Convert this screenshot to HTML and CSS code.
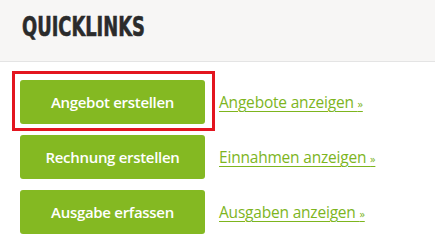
FILE: index.html
```html
<!DOCTYPE html>
<html lang="de">
<head>
<meta charset="utf-8">
<title>Quicklinks</title>
<link rel="stylesheet" href="styles.css">
</head>
<body>
<section class="quicklinks">
  <header class="ql-header">
    <h2 class="ql-title">QUICKLINKS</h2>
  </header>
  <div class="ql-list">
    <div class="ql-row">
      <a class="ql-button is-highlighted" href="#">Angebot erstellen</a>
      <a class="ql-link" href="#">Angebote anzeigen <span class="raquo">»</span></a>
    </div>
    <div class="ql-row">
      <a class="ql-button" href="#">Rechnung erstellen</a>
      <a class="ql-link" href="#">Einnahmen anzeigen <span class="raquo">»</span></a>
    </div>
    <div class="ql-row">
      <a class="ql-button" href="#">Ausgabe erfassen</a>
      <a class="ql-link" href="#">Ausgaben anzeigen <span class="raquo">»</span></a>
    </div>
  </div>
</section>
</body>
</html>
```

FILE: styles.css
```css
html, body {
  margin: 0;
  padding: 0;
  background: #ffffff;
}

.quicklinks {
  width: 435px;
  height: 249px;
  font-family: "Open Sans", "DejaVu Sans", sans-serif;
}

.ql-header {
  box-sizing: border-box;
  height: 62px;
  padding: 13px 0 0 22px;
  background: #f7f6f5;
  border-bottom: 1px solid #e4e4e4;
}

.ql-title {
  margin: 0;
  display: inline-block;
  font-family: "DejaVu Sans", sans-serif;
  font-stretch: condensed;
  font-weight: bold;
  font-size: 27px;
  line-height: 1;
  color: #2b2b2b;
  -webkit-text-stroke: 0.6px #2b2b2b;
  transform: scaleX(0.735);
  transform-origin: left top;
}

.ql-list {
  display: flex;
  flex-direction: column;
  gap: 11px;
  padding: 18px 0 0 20px;
}

.ql-row {
  display: flex;
  align-items: center;
  gap: 14px;
}

.ql-button {
  position: relative;
  display: flex;
  align-items: center;
  justify-content: center;
  width: 185px;
  height: 44px;
  border-radius: 3px;
  background: #84b922;
  color: #ffffff;
  font-size: 15px;
  font-weight: 600;
  letter-spacing: -0.3px;
  text-decoration: none;
}

.ql-button.is-highlighted::after {
  content: "";
  position: absolute;
  left: -8px;
  top: -9px;
  right: -10px;
  bottom: -7px;
  border: 3px solid #e3151f;
}

.ql-link {
  color: #7db51e;
  font-size: 15.5px;
  text-decoration: underline;
  text-underline-offset: 3px;
  letter-spacing: -0.2px;
}

.raquo {
  font-size: 11px;
}
```
